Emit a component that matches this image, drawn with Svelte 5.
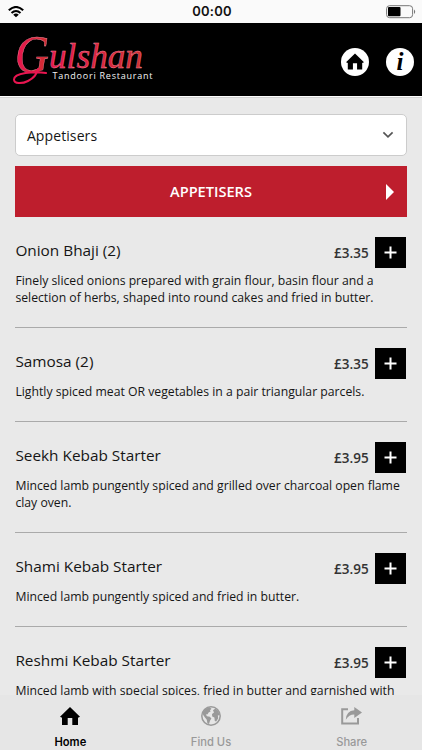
<script lang="ts">
  interface Dish {
    name: string;
    price: string;
    description: string;
  }

  const dishes: Dish[] = [
    {
      name: 'Onion Bhaji (2)',
      price: '£3.35',
      description:
        'Finely sliced onions prepared with grain flour, basin flour and a selection of herbs, shaped into round cakes and fried in butter.'
    },
    {
      name: 'Samosa (2)',
      price: '£3.35',
      description: 'Lightly spiced meat OR vegetables in a pair triangular parcels.'
    },
    {
      name: 'Seekh Kebab Starter',
      price: '£3.95',
      description: 'Minced lamb pungently spiced and grilled over charcoal open flame clay oven.'
    },
    {
      name: 'Shami Kebab Starter',
      price: '£3.95',
      description: 'Minced lamb pungently spiced and fried in butter.'
    },
    {
      name: 'Reshmi Kebab Starter',
      price: '£3.95',
      description: 'Minced lamb with special spices, fried in butter and garnished with'
    }
  ];

  let activeTab = $state('Home');
</script>

{#snippet house()}
  <path d="M10 0 20 9.7 18 10.7V18H12.3V11H7.7V18H2V10.7L0 9.7Z" />
{/snippet}

<div class="screen">
  <div class="status">
    <svg class="wifi" width="16" height="12" viewBox="0 0 16 12">
      <g fill="none" stroke="#000" stroke-width="2.1">
        <path d="M.8 4.3Q8-2.3 15.2 4.3" />
        <path d="M3.5 7Q8 3 12.5 7" />
      </g>
      <path d="M8 11.2 5.2 8.7Q8 6.5 10.8 8.7Z" />
    </svg>
    <span class="time">00:00</span>
    <svg class="battery" width="30" height="14" viewBox="0 0 30 14">
      <rect x=".6" y=".7" width="26" height="12" rx="3" fill="none" stroke="#777" />
      <rect x="2" y="2.1" width="12.5" height="9.2" rx="1" />
      <path d="M28 4.5Q30.4 6.7 28 9Z" fill="#777" />
    </svg>
  </div>

  <header>
    <svg class="logo" width="160" height="73" viewBox="0 0 160 73">
      <defs>
        <linearGradient id="ink" x1="0" x2="1">
          <stop offset="0" stop-color="#e91550" />
          <stop offset="1" stop-color="#cf3030" />
        </linearGradient>
      </defs>
      <g class="script">
        <text x="15" y="49" font-size="52" textLength="34" lengthAdjust="spacingAndGlyphs">G</text>
        <text x="49" y="45" font-size="35" textLength="94" lengthAdjust="spacingAndGlyphs">ulshan</text>
      </g>
      <!-- flourish under the initial -->
      <path class="swash" d="M46 50C34 48 14 50 14 56.5 14 61 22 61 28 58 34 55 37 51 38 46" />
      <text class="tagline" x="52.5" y="56" textLength="100">Tandoori Restaurant</text>
    </svg>
    <div class="actions">
      <button aria-label="Home">
        <svg width="18" height="17" viewBox="0 0 20 18">{@render house()}</svg>
      </button>
      <button class="info" aria-label="Information">i</button>
    </div>
  </header>

  <main>
    <button class="select">
      <span>Appetisers</span>
      <svg width="12" height="8" viewBox="0 0 12 8">
        <path d="M1.4 1.4 6 5.8 10.6 1.4" fill="none" stroke="#555" stroke-width="1.7" />
      </svg>
    </button>
    <div class="category">
      <h2>APPETISERS</h2>
      <span class="arrow"></span>
    </div>

    {#each dishes as dish}
      <article>
        <div class="row">
          <h3>{dish.name}</h3>
          <span class="price">{dish.price}</span>
          <button class="add" aria-label="Add {dish.name}">
            <svg width="13" height="13" viewBox="0 0 13 13">
              <path d="M6.5 .5V12.5M.5 6.5H12.5" stroke="#fff" stroke-width="2" />
            </svg>
          </button>
        </div>
        <p>{dish.description}</p>
      </article>
    {/each}
  </main>

  <nav>
    <button class:active={activeTab === 'Home'} onclick={() => (activeTab = 'Home')}>
      <svg width="20" height="18" viewBox="0 0 20 18" fill="currentColor">{@render house()}</svg>
      <span>Home</span>
    </button>
    <button class:active={activeTab === 'Find Us'} onclick={() => (activeTab = 'Find Us')}>
      <svg width="20" height="20" viewBox="0 0 20 20" fill="currentColor">
        <circle cx="10" cy="10" r="9.2" fill="none" stroke="currentColor" stroke-width="1.5" />
        <path d="M1.5 6.5 4.5 2.8 8.5 1.2 10.5 2.8 9 4.3 9.6 5.4 7.6 6.6 6.6 8.3 4.8 8.6 6 10.2 8.8 10.8 10.4 12.6 9 14.8 8 18 6.4 17.2 5.8 13.8 3.8 11.2 2.2 9Z" />
        <path d="M12 4.2 14.4 2.6 17 4.8 19 9 16.8 9.6 17.2 12.2 15.2 15.6 13.8 15 13.4 11.6 11.2 10.6 11 8 13 6.4Z" />
      </svg>
      <span>Find Us</span>
    </button>
    <button class:active={activeTab === 'Share'} onclick={() => (activeTab = 'Share')}>
      <svg width="22" height="18" viewBox="0 0 22 18" fill="currentColor">
        <path d="M7 2.2H1.2V16.5H17V11" fill="none" stroke="currentColor" stroke-width="2" />
        <path d="M13.3 0 21 5.5 13.3 11V7.6Q8 7.5 4.8 12.8 5.2 4 13.3 3.3Z" />
      </svg>
      <span>Share</span>
    </button>
  </nav>
</div>

<style>
  :global(body) {
    margin: 0;
    background: #e9e9e9;
  }

  .screen {
    width: 422px;
    height: 750px;
    display: flex;
    flex-direction: column;
    overflow: hidden;
    background: #e9e9e9;
    color: #151515;
    font-family: 'Open Sans', 'Noto Sans', sans-serif;
  }

  button {
    padding: 0;
    border: 0;
    font: inherit;
    color: inherit;
  }

  svg {
    display: block;
    flex: none;
  }

  .status {
    flex: none;
    height: 23px;
    box-sizing: border-box;
    padding: 0 4px 0 8px;
    display: grid;
    grid-template-columns: 1fr auto 1fr;
    align-items: center;
    background: #fafafa;
  }

  .time {
    padding-right: 5px;
    margin-left: 3px;
    font: 600 13px/23px Inter, sans-serif;
    letter-spacing: 0.2px;
    color: #111;
  }

  .battery {
    justify-self: end;
    margin-right: 2px;
  }

  header {
    flex: none;
    height: 73px;
    display: flex;
    justify-content: space-between;
    background: #000;
    border-bottom: 1px solid #fff;
    box-shadow: 0 1px #d4d4d4;
  }

  .script {
    font-family: 'Liberation Serif', serif;
    font-style: italic;
    fill: url(#ink);
    stroke: #f58a9c;
    stroke-width: 0.4px;
  }

  .swash {
    fill: none;
    stroke: #e91550;
    stroke-width: 2px;
    stroke-linecap: round;
  }

  .tagline {
    font-size: 9px;
    fill: #f4f4f4;
  }

  .actions {
    display: flex;
    align-items: center;
    gap: 17px;
    padding: 4px 8px 0 0;
  }

  .actions button {
    width: 28px;
    height: 28px;
    display: flex;
    align-items: center;
    justify-content: center;
    border-radius: 50%;
    background: #fff;
    color: #000;
  }

  .actions .info {
    font: italic bold 25px/28px 'Liberation Serif', serif;
  }

  main {
    flex: 1;
    min-height: 0;
    overflow: hidden;
    padding: 17px 15.4px 0 15.4px;
  }

  .select {
    width: 100%;
    height: 42px;
    box-sizing: border-box;
    display: flex;
    align-items: center;
    justify-content: space-between;
    padding: 0 12px 0 10.5px;
    border: 1px solid #ccc;
    border-radius: 5px;
    background: #fff;
    font-size: 14px;
    letter-spacing: 0.1px;
  }

  .category {
    height: 51px;
    margin-top: 10px;
    margin-bottom: 20px;
    display: grid;
    grid-template-columns: 1fr auto 1fr;
    align-items: center;
    background: #be1e2d;
    color: #fff;
  }

  h2 {
    grid-column: 2;
    margin: 0 0 1px;
    font-size: 14.6px;
    font-weight: 600;
  }

  .arrow {
    justify-self: end;
    margin-right: 13px;
    border-left: 8px solid #fff;
    border-top: 8px solid transparent;
    border-bottom: 8px solid transparent;
  }

  article {
    border-bottom: 1px solid #aaa;
    padding-bottom: 21px;
    margin-bottom: 20px;
  }

  .row {
    height: 31px;
    display: flex;
    align-items: center;
    padding-right: 1px;
  }

  h3 {
    flex: 1;
    margin: 0 0 6px;
    font-size: 15.35px;
    font-weight: 400;
    line-height: 22px;
  }

  .price {
    font-size: 13.5px;
    font-weight: 600;
    color: #333;
    margin-right: 6px;
  }

  .add {
    width: 31px;
    height: 31px;
    display: flex;
    align-items: center;
    justify-content: center;
    background: #000;
  }

  p {
    margin: 4px 0 0;
    font-size: 12.23px;
    line-height: 17px;
  }

  nav {
    flex: none;
    height: 55px;
    display: grid;
    grid-template-columns: repeat(3, 1fr);
    background: #e6e6e6;
  }

  nav button {
    display: grid;
    grid-template-rows: 42px 11px;
    justify-items: center;
    align-items: center;
    background: none;
    color: #999;
    font: 500 11.2px/11px Inter, sans-serif;
  }

  nav .active {
    color: #000;
    font-weight: 600;
  }
</style>
